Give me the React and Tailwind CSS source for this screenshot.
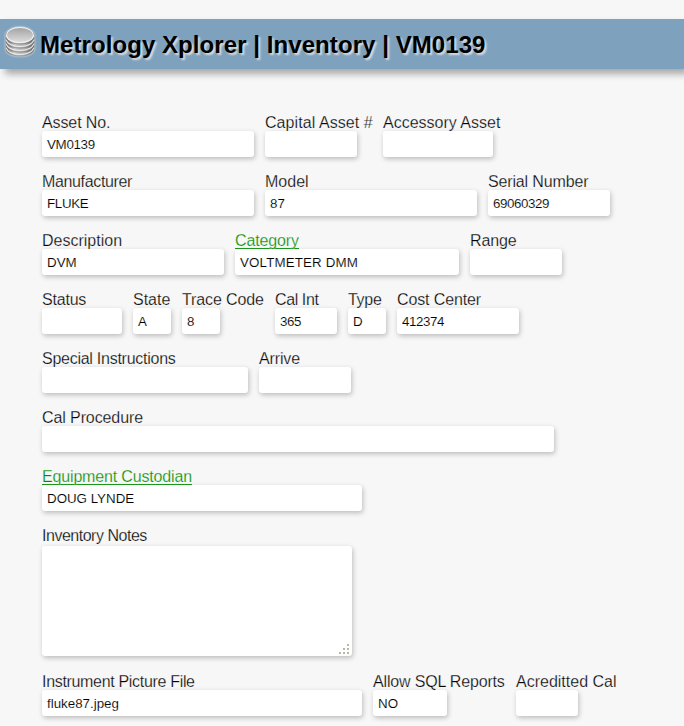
const rows = [
  [
    { label: 'Asset No.', value: 'VM0139', w: 'w-[212px]', col: 'w-[212px]', lt: 'tracking-[-0.1px]', vt: 'tracking-[-0.3px]' },
    { label: 'Capital Asset #', value: '', w: 'w-[92px]', col: 'w-[107px]', lt: 'tracking-[0.07px]' },
    { label: 'Accessory Asset', value: '', w: 'w-[110px]', col: 'w-[117px]' },
  ],
  [
    { label: 'Manufacturer', value: 'FLUKE', w: 'w-[212px]', col: 'w-[212px]', lt: 'tracking-[-0.35px]', vt: 'tracking-[-0.3px]' },
    { label: 'Model', value: '87', w: 'w-[212px]', col: 'w-[212px]' },
    { label: 'Serial Number', value: '69060329', w: 'w-[122px]', col: 'w-[122px]', lt: 'tracking-[-0.15px]', vt: 'tracking-[-0.43px]' },
  ],
  [
    { label: 'Description', value: 'DVM', w: 'w-[182px]', col: 'w-[182px]' },
    { label: 'Category', value: 'VOLTMETER DMM', w: 'w-[224px]', col: 'w-[224px]', link: true, lt: 'tracking-[-0.12px]', vt: 'tracking-[0.15px]' },
    { label: 'Range', value: '', w: 'w-[92px]', col: 'w-[92px]', lt: 'tracking-[-0.15px]' },
  ],
  [
    { label: 'Status', value: '', w: 'w-[80px]', col: 'w-[80px]', lt: 'tracking-[-0.2px]' },
    { label: 'State', value: 'A', w: 'w-[38px]', col: 'w-[38px]' },
    { label: 'Trace Code', value: '8', w: 'w-[38px]', col: 'w-[82px]', lt: 'tracking-[-0.12px]' },
    { label: 'Cal Int', value: '365', w: 'w-[62px]', col: 'w-[62px]', lt: 'tracking-[-0.4px]', vt: 'tracking-[-0.45px]' },
    { label: 'Type', value: 'D', w: 'w-[38px]', col: 'w-[38px]', lt: 'tracking-[-0.3px]' },
    { label: 'Cost Center', value: '412374', w: 'w-[122px]', col: 'w-[122px]', lt: 'tracking-[-0.12px]', vt: 'tracking-[-0.43px]' },
  ],
  [
    { label: 'Special Instructions', value: '', w: 'w-[206px]', col: 'w-[206px]', lt: 'tracking-[-0.26px]' },
    { label: 'Arrive', value: '', w: 'w-[92px]', col: 'w-[92px]', lt: 'tracking-[-0.15px]' },
  ],
  [{ label: 'Cal Procedure', value: '', w: 'w-[512px]', col: 'w-[512px]', lt: 'tracking-[-0.1px]' }],
  [{ label: 'Equipment Custodian', value: 'DOUG LYNDE', w: 'w-[320px]', col: 'w-[320px]', link: true, lt: 'tracking-[-0.16px]' }],
  [{ label: 'Inventory Notes', value: '', w: 'w-[310px]', col: 'w-[310px]', area: true, lt: 'tracking-[-0.48px]' }],
  [
    { label: 'Instrument Picture File', value: 'fluke87.jpeg', w: 'w-[320px]', col: 'w-[320px]', lt: 'tracking-[-0.32px]' },
    { label: 'Allow SQL Reports', value: 'NO', w: 'w-[74px]', col: 'w-[132px]', lt: 'tracking-[-0.17px]' },
    { label: 'Acreditted Cal', value: '', w: 'w-[62px]', col: 'w-[100px]' },
  ],
];

function Grip() {
  return (
    <svg width="10" height="10" viewBox="0 0 10 10" fill="#b8b8a4" shapeRendering="crispEdges">
      <path d="M8 0h2v2h-2zM4 4h2v2h-2zM8 4h2v2h-2zM0 8h2v2h-2zM4 8h2v2h-2zM8 8h2v2h-2z" />
    </svg>
  );
}

function Field({ label, value, w, col, link, area, lt = '', vt = '' }) {
  const box = 'rounded-[3px] bg-white shadow-[1px_2px_5px_rgba(0,0,0,0.24)]';
  return (
    <div className={`${col} shrink-0`}>
      <div className={`${lt} h-[18px] whitespace-nowrap text-[16px] leading-[19px] [-webkit-text-stroke:0.25px_#f7f7f7]`}>
        {link ? (
          <a className="inline-block h-[18px] border-b border-[#199619] text-[#008c00]">{label}</a>
        ) : (
          label
        )}
      </div>
      {area ? (
        <div className={`${w} ${box} mt-[2px] mb-px flex h-[110px] items-end justify-end pr-[3px] pb-[2px]`}>
          <Grip />
        </div>
      ) : (
        <div className={`${w} ${box} ${vt} h-[26px] whitespace-nowrap pl-[5px] text-[13.33px] leading-[27px] [-webkit-text-stroke:0.12px_#fff]`}>
          {value}
        </div>
      )}
    </div>
  );
}

function DatabaseIcon() {
  return (
    <svg className="drop-shadow-[0_0_1px_#fff]" width="32" height="32" viewBox="0 0 32 32">
      <defs>
        <linearGradient id="side" x1="0" x2="1">
          <stop offset="0" stopColor="#6a6a6a" />
          <stop offset=".3" stopColor="#c8c8c8" />
          <stop offset=".65" stopColor="#b4b4b4" />
          <stop offset="1" stopColor="#606060" />
        </linearGradient>
        <linearGradient id="top" x1="0" y1="0" x2="0" y2="1">
          <stop offset="0" stopColor="#a2a2a2" />
          <stop offset="1" stopColor="#dedede" />
        </linearGradient>
      </defs>
      {[18, 14, 10, 6].map((y) => (
        <g key={y}>
          <path d={`M2 ${y + 1}v4c0 4 6 7 14 7s14-3 14-7v-4z`} fill="url(#side)" stroke="#777" strokeWidth=".6" />
          <path d={`M2.500 ${y + 3.5}c0 4 6 7 13.500 7s13.500-3 13.500-7`} fill="none" stroke="#eee" strokeWidth="1.100" />
        </g>
      ))}
      <ellipse cx="16" cy="9" rx="13.500" ry="7.500" fill="url(#top)" stroke="#f2f2f2" />
    </svg>
  );
}

export default function App() {
  return (
    <div className="h-[726px] w-[684px] overflow-hidden bg-[#f7f7f7] pt-[19px] font-['Liberation_Sans',Arial,sans-serif] text-black">
      <header className="flex h-[50px] items-center bg-[#7ea1bd] pl-[4px] shadow-[5px_5px_7px_rgba(0,0,0,0.32)]">
        <div className="mb-[4px]"><DatabaseIcon /></div>
        <h1 className="ml-[4px] whitespace-nowrap pt-[2px] text-[24px] leading-[50px] font-bold tracking-[0.07px] [text-shadow:2px_2px_2px_#ddd]">
          Metrology Xplorer | Inventory | VM0139
        </h1>
      </header>
      <main className="flex flex-col gap-[15px] pt-[44px] pl-[42px]">
        {rows.map((fields, i) => (
          <div key={i} className="flex gap-[11px]">
            {fields.map((f) => (
              <Field key={f.label} {...f} />
            ))}
          </div>
        ))}
      </main>
    </div>
  );
}
